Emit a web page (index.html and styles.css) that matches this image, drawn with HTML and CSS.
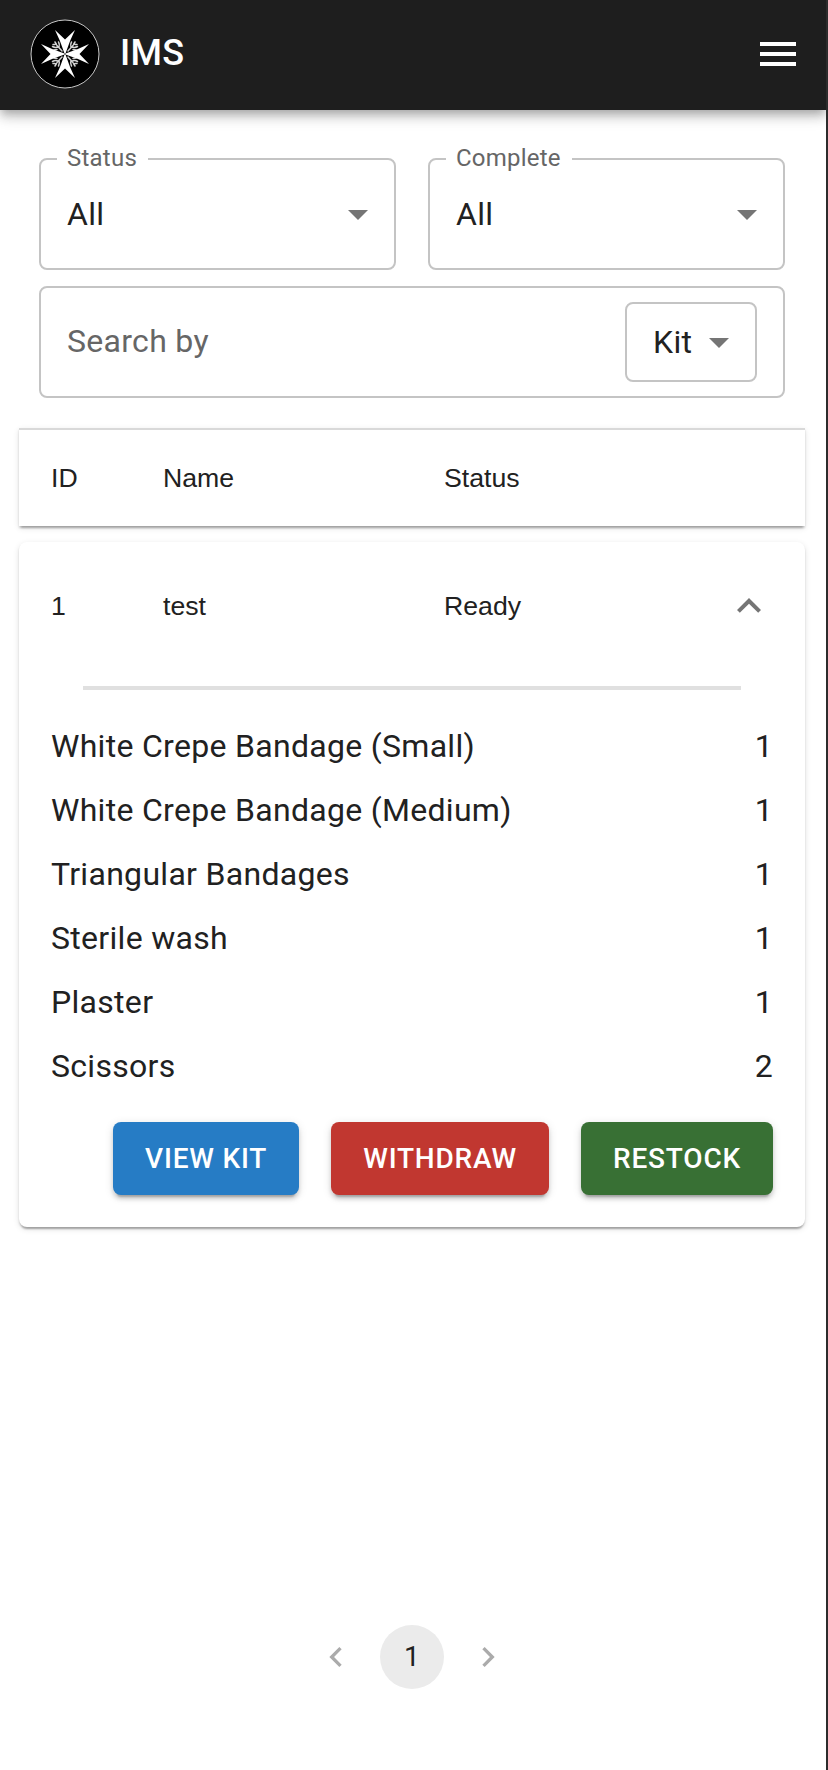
FILE: index.html
```html
<!DOCTYPE html>
<html lang="en">
<head>
<meta charset="utf-8">
<title>IMS</title>
<link rel="stylesheet" href="styles.css">
</head>
<body>
<div class="app">
  <header class="app-bar">
    <svg class="logo" viewBox="0 0 70 70">
      <circle cx="35" cy="35" r="34" fill="#000" stroke="#c8c8c8" stroke-width="1"/>
      <g fill="none" stroke="#d4d4d4" stroke-width="1.5" stroke-linecap="round">
        <path id="sprig" d="M38 32l5-5.500M41 28.500q-1-3 .5-5.500M42 28q3 1 5.500-.5M43.500 25.500l1.500-2.500M45 25.500h2M43 30.500l3 .5"/>
        <use href="#sprig" transform="translate(70 0) scale(-1 1)"/>
        <use href="#sprig" transform="rotate(180 35 35)"/>
        <use href="#sprig" transform="translate(0 70) scale(1 -1)"/>
      </g>
      <g fill="#fff">
        <path id="arm" d="M34.500 34.500Q30.500 22 25 11L35 20.500 45 11Q39.500 22 35.500 34.500z"/>
        <use href="#arm" transform="rotate(90 35 35)"/>
        <use href="#arm" transform="rotate(180 35 35)"/>
        <use href="#arm" transform="rotate(270 35 35)"/>
      </g>
    </svg>
    <h1 class="title">IMS</h1>
    <svg class="menu" viewBox="0 0 24 24"><path d="M3 18h18v-2H3v2zm0-5h18v-2H3v2zm0-7v2h18V6H3z"/></svg>
  </header>

  <section class="filters">
    <div class="select">
      <span class="label">Status</span>
      <span>All</span>
      <svg class="caret" viewBox="0 0 24 24"><path d="M7 10l5 5 5-5z"/></svg>
    </div>
    <div class="select">
      <span class="label">Complete</span>
      <span>All</span>
      <svg class="caret" viewBox="0 0 24 24"><path d="M7 10l5 5 5-5z"/></svg>
    </div>
    <div class="search">
      <span class="placeholder">Search by</span>
      <div class="search-type">
        <span>Kit</span>
        <svg class="caret" viewBox="0 0 24 24"><path d="M7 10l5 5 5-5z"/></svg>
      </div>
    </div>
  </section>

  <div class="table-head grid">
    <span>ID</span><span>Name</span><span>Status</span>
  </div>

  <article class="kit">
    <div class="summary grid">
      <span>1</span><span>test</span><span>Ready</span>
      <svg class="expand" viewBox="0 0 24 24"><path d="M12 8l-6 6 1.410 1.410L12 10.830l4.590 4.580L18 14z"/></svg>
    </div>
    <hr class="divider">
    <ul class="contents">
      <li><span>White Crepe Bandage (Small)</span><span>1</span></li>
      <li><span>White Crepe Bandage (Medium)</span><span>1</span></li>
      <li><span>Triangular Bandages</span><span>1</span></li>
      <li><span>Sterile wash</span><span>1</span></li>
      <li><span>Plaster</span><span>1</span></li>
      <li><span>Scissors</span><span>2</span></li>
    </ul>
    <div class="actions">
      <button class="btn view">VIEW KIT</button>
      <button class="btn withdraw">WITHDRAW</button>
      <button class="btn restock">RESTOCK</button>
    </div>
  </article>

  <nav class="pagination">
    <span class="page"><svg viewBox="0 0 24 24"><path d="M15.410 7.410L14 6l-6 6 6 6 1.410-1.410L10.830 12z"/></svg></span>
    <span class="page current">1</span>
    <span class="page"><svg viewBox="0 0 24 24"><path d="M10 6L8.590 7.410 13.170 12l-4.580 4.590L10 18l6-6z"/></svg></span>
  </nav>
</div>
</body>
</html>
```
FILE: styles.css
```css
* { box-sizing: border-box; }

body {
  margin: 0;
  background: #fff;
  color: #212121;
  font: 400 32px/48px Roboto, sans-serif;
  letter-spacing: 0.3px;
}

svg { display: block; flex: none; }

.app {
  display: flex;
  flex-direction: column;
  height: 1770px;
  border-right: 2px solid #2c2c2c;
}

.app-bar {
  display: flex;
  align-items: center;
  flex: none;
  height: 110px;
  padding: 0 24px 2px 30px;
  background: #1e1e1e;
  color: #fff;
  box-shadow: 0 4px 8px -2px rgba(0,0,0,.2), 0 8px 10px rgba(0,0,0,.14), 0 2px 20px rgba(0,0,0,.12);
  clip-path: inset(0 0 -40px 0);
}
.logo { width: 70px; height: 70px; }
.title {
  margin: 0 auto 2px 20px;
  font-size: 36px;
  font-weight: 500;
  line-height: 50px;
}
.menu { width: 48px; height: 48px; fill: #fff; }

.filters {
  display: grid;
  grid-template-columns: 1fr 1fr;
  gap: 16px 32px;
  margin: 48px 41px 0 39px;
}
.select, .search, .search-type {
  display: flex;
  align-items: center;
  justify-content: space-between;
  height: 112px;
  padding: 0 12px 0 26px;
  border: 2px solid #c4c4c4;
  border-radius: 8px;
}
.select { position: relative; }
.label {
  position: absolute;
  top: -20px;
  left: 16px;
  padding: 0 11px 0 10px;
  background: #fff;
  color: #666;
  font-size: 24px;
  line-height: 36px;
  letter-spacing: 0.23px;
}
.caret { width: 48px; height: 48px; fill: #757575; }
.search { grid-column: 1 / 3; padding-right: 26px; }
.search-type { width: 132px; height: 80px; }
.placeholder { padding-bottom: 2px; color: #666; }

.grid {
  display: grid;
  grid-template-columns: 112px 281px 1fr 48px;
  align-items: center;
  padding: 0 32px;
  font: 26.67px/32px "Liberation Sans", Arial, sans-serif;
  letter-spacing: 0;
}
.table-head, .kit {
  margin: 0 21px 0 19px;
  background: #fff;
  box-shadow: 0 4px 2px -2px rgba(0,0,0,.2), 0 2px 2px rgba(0,0,0,.14), 0 2px 6px rgba(0,0,0,.12);
}
.table-head {
  height: 98px;
  margin-top: 30px;
  border-top: 2px solid #d9d9d9;
}
.kit {
  height: 685px;
  margin-top: 16px;
  border-radius: 8px;
}
.summary { height: 128px; }
.expand { width: 48px; height: 48px; fill: #757575; }
.divider {
  height: 4px;
  margin: 16px 64px 24px;
  border: 0;
  background: #e0e0e0;
}
.contents {
  margin: 0;
  padding: 0 32px;
  list-style: none;
}
.contents li {
  display: flex;
  justify-content: space-between;
  padding: 8px 0;
}
.actions {
  display: flex;
  justify-content: flex-end;
  gap: 32px;
  padding: 24px 32px 0;
}
.btn {
  height: 73px;
  padding: 0 32px;
  border: 0;
  border-radius: 8px;
  color: #fff;
  font: 500 28px/49px Roboto, sans-serif;
  letter-spacing: 0.8px;
  box-shadow: 0 6px 2px -4px rgba(0,0,0,.2), 0 4px 4px rgba(0,0,0,.14), 0 2px 10px rgba(0,0,0,.12);
}
.view { background: #267cc5; }
.withdraw { background: #c13730; }
.restock { background: #387034; }

.pagination {
  display: flex;
  justify-content: center;
  gap: 12px;
  margin: auto 2px 81px 0;
}
.page {
  display: grid;
  place-items: center;
  width: 64px;
  height: 64px;
  border-radius: 50%;
  font-size: 28px;
}
.page svg { width: 40px; height: 40px; fill: #ababab; }
.current { background: #ebebeb; }
```
